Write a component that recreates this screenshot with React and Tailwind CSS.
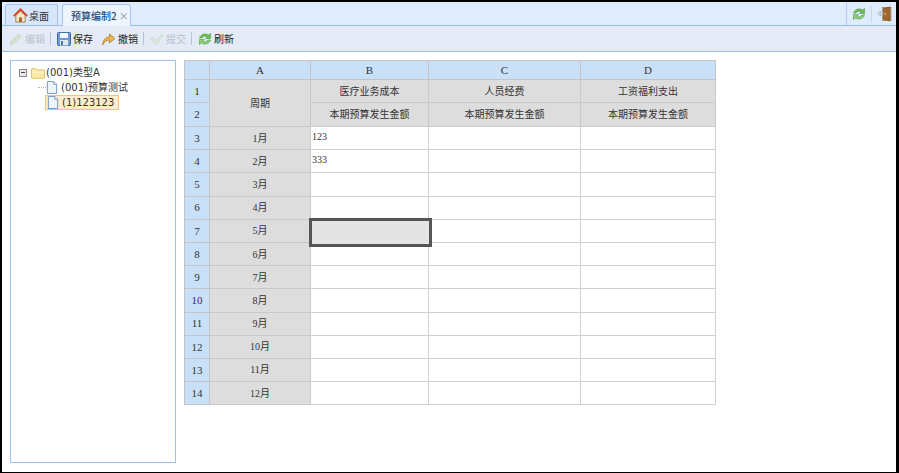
// Budget sheet screen: tabs, toolbar, tree on the left and spreadsheet on the right
const CJK = '"Noto Sans CJK SC", sans-serif';

const COLS = [
  { label: 'A', width: 'w-[101px]' },
  { label: 'B', width: 'w-[118px]' },
  { label: 'C', width: 'w-[152px]' },
  { label: 'D', width: 'w-[135px]' },
];
const MONTHS = ['1月', '2月', '3月', '4月', '5月', '6月', '7月', '8月', '9月', '10月', '11月', '12月'];

function HomeIcon() {
  return (
    <svg width="15" height="15" viewBox="0 0 16 16">
      <path d="M3 8v7h10V8L8 3.500z" fill="#f4e6c8" stroke="#8a6a3a" strokeWidth="0.8" />
      <rect x="6.500" y="10" width="3" height="5" fill="#a8622a" />
      <path d="M0.800 8.600 8 1.500l7.200 7.100" fill="none" stroke="#d8401f" strokeWidth="2" />
    </svg>
  );
}

function PencilIcon() {
  return (
    <svg width="14" height="14" viewBox="0 0 14 14">
      <path d="M1 13 2 9.500 9.500 2l2.500 2.500-7.500 7.500z" fill="#d3e3cf" stroke="#c3d3bf" strokeWidth="0.8" />
    </svg>
  );
}

function SaveIcon() {
  return (
    <svg width="14" height="14" viewBox="0 0 14 14">
      <rect x="0.500" y="0.500" width="13" height="13" rx="1" fill="#6f9bd0" stroke="#3d6ba5" />
      <rect x="3" y="1" width="8" height="5" fill="#f4f8fc" />
      <rect x="3" y="8" width="8" height="5.500" fill="#dfe7ef" />
      <rect x="4" y="9" width="2" height="4" fill="#4a77ad" />
    </svg>
  );
}

function UndoIcon() {
  return (
    <svg width="15" height="14" viewBox="0 0 15 14">
      <path d="M1.500 13C2 8 5 5 8.500 5V2l5.500 4.500L8.500 11V8c-3 0-5 1.500-7 5z" fill="#f3b54a" stroke="#a87a2a" strokeWidth="0.8" />
    </svg>
  );
}

function CheckIcon() {
  return (
    <svg width="14" height="14" viewBox="0 0 15 14">
      <path d="M1 7.500 3.500 5.500 6 8.500 12.500 2 14 3.500 6 12.500z" fill="#dbe8dc" stroke="#c5d5c8" strokeWidth="0.8" />
    </svg>
  );
}

function RefreshIcon() {
  return (
    <svg width="14" height="14" viewBox="0 0 14 14">
      <path d="M1.500 6C2.500 2.500 7 0.500 10.500 3L12.500 1.500V6.500H7.500L9.300 5C7.500 3.500 5 4 4 6z" fill="#6cbb55" stroke="#4a9a42" strokeWidth="0.6" />
      <path d="M12.500 8C11.500 11.500 7 13.500 3.500 11L1.500 12.500V7.500H6.500L4.700 9C6.500 10.500 9 10 10 8z" fill="#8fd079" stroke="#4a9a42" strokeWidth="0.6" />
    </svg>
  );
}

function DoorIcon() {
  return (
    <svg width="16" height="16" viewBox="0 0 16 16">
      <rect x="5.500" y="1.500" width="8.500" height="13" fill="#d6cfc2" stroke="#8a6a3a" strokeWidth="0.6" />
      <path d="M6.500 2.500 13 1v14l-6.500-1.500z" fill="#a0682f" stroke="#74481c" strokeWidth="0.6" />
      <rect x="7.500" y="7" width="1" height="2" fill="#e8d8a8" />
      <path d="M0.500 7.500 3.500 5V6.500H6V8.500H3.500V10z" fill="#d3dae0" stroke="#8f9aa5" strokeWidth="0.5" />
    </svg>
  );
}

function FolderIcon() {
  return (
    <svg width="14" height="12" viewBox="0 0 16 13">
      <path d="M0.500 11.500V2.500Q0.500 1.500 1.500 1.500H5.500L7 3H14.500Q15.500 3 15.500 4V11.500Q15.500 12.500 14.500 12.500H1.500Q0.500 12.500 0.500 11.500z" fill="#fbe9a6" stroke="#d8b95c" />
      <path d="M1 5.500H15" stroke="#fff6cf" />
    </svg>
  );
}

function FileIcon() {
  return (
    <svg width="12" height="13" viewBox="0 0 12 14">
      <path d="M1 0.500H8L11 3.500V13.500H1z" fill="#eef4fc" stroke="#6f92c0" />
      <path d="M8 0.500V3.500H11" fill="#fff" stroke="#6f92c0" />
    </svg>
  );
}

function ToolButton({ icon, label, disabled }) {
  return (
    <div className={`flex items-center gap-[2px] text-[10px] ${disabled ? 'text-[#b9c1cb]' : 'text-[#222]'}`}>
      {icon}
      <span>{label}</span>
    </div>
  );
}

function ToolSep() {
  return <div className="ml-[5px] mr-[6px] h-[13px] w-px bg-[#b4c4d8]" />;
}

function Tree() {
  return (
    <div className="h-[403px] w-[166px] shrink-0 border border-[#9cc2ec] bg-white pl-[8px] pt-[4px] text-[10px] text-[#333]" style={{ fontFamily: `"DejaVu Sans", ${CJK}` }}>
      <div className="flex h-[15px] items-center">
        <span className="flex h-[8px] w-[8px] items-center justify-center border border-[#888] bg-[#e8e8e8]">
          <span className="h-px w-[4px] bg-[#444]" />
        </span>
        <span className="ml-[4px]"><FolderIcon /></span>
        <span className="ml-px">(001)类型A</span>
      </div>
      <div className="flex h-[15px] items-center pl-[19px]">
        <span className="w-[8px] border-t border-dotted border-[#bbb]" />
        <FileIcon />
        <span className="ml-[3px]">(001)预算测试</span>
      </div>
      <div className="flex h-[15px] items-center pl-[26px]">
        <div className="flex h-[15px] items-center border border-[#f5c27a] bg-[#fdeccd] pl-px pr-[4px]">
          <FileIcon />
          <span className="ml-[3px]">(1)123123</span>
        </div>
      </div>
    </div>
  );
}

function Sheet() {
  const th = 'border border-[#c4c4c4] bg-[#c9e0f9] text-center text-[11px] font-normal';
  const head = 'border border-[#c9c9c9] bg-[#dddddd] text-center font-normal';
  const cell = 'border border-[#cfcfcf] bg-white px-[1px] pb-[3px] text-left font-normal';

  return (
    <table className="table-fixed border-collapse text-[10px] text-[#333]" style={{ fontFamily: `"Liberation Serif", ${CJK}` }}>
      <colgroup>
        <col className="w-[25px]" />
        {COLS.map((c) => <col key={c.label} className={c.width} />)}
      </colgroup>
      <tbody>
        <tr className="h-[19px]">
          <th className={th} />
          {COLS.map((c) => <th key={c.label} className={th}>{c.label}</th>)}
        </tr>
        <tr className="h-[23px]">
          <th className={th}>1</th>
          <td rowSpan={2} className={head}>周期</td>
          <td className={head}>医疗业务成本</td>
          <td className={head}>人员经费</td>
          <td className={head}>工资福利支出</td>
        </tr>
        <tr className="h-[24px]">
          <th className={th}>2</th>
          <td className={head}>本期预算发生金额</td>
          <td className={head}>本期预算发生金额</td>
          <td className={head}>本期预算发生金额</td>
        </tr>
        {MONTHS.map((m, i) => (
          <tr key={m} className="h-[23.2px]">
            <th className={th}>{i + 3}</th>
            <td className={head}>{m}</td>
            <td className={`${cell} relative`}>
              {i === 0 && '123'}
              {i === 1 && '333'}
              {/* selected cell marker */}
              {i === 4 && <div className="absolute -bottom-[5px] -left-[2px] -right-[4px] -top-[2px] z-10 border-[3px] border-[#555555] bg-[#e4e4e4]" />}
            </td>
            <td className={cell} />
            <td className={cell} />
          </tr>
        ))}
      </tbody>
    </table>
  );
}

export default function App() {
  return (
    <div className="flex h-[473px] w-[899px] flex-col overflow-hidden border-b border-l-2 border-r-[3px] border-t-2 border-black bg-white" style={{ fontFamily: CJK }}>
      {/* Tabs */}
      <div className="flex h-[24px] shrink-0 items-end justify-between border-b border-[#99bbe8] bg-[#deecfd] pl-[3px]">
        <div className="flex items-end gap-[4px]">
          <div className="flex h-[21px] w-[53px] items-center gap-px rounded-t-[3px] border border-b-0 border-[#a8c4ea] bg-[#d6e5f8] pl-[7px] text-[10px] text-[#333]">
            <HomeIcon />
            <span>桌面</span>
          </div>
          <div className="-mb-px flex h-[22px] w-[69px] items-center gap-[2px] rounded-t-[3px] border border-b-0 border-[#a8c4ea] bg-[#eef4fb] pl-[8px] text-[10px] font-medium">
            <span className="text-[#2b4a78]">预算编制2</span>
            <span className="text-[10px] leading-none text-[#8a9bb0]">×</span>
          </div>
        </div>
        <div className="flex h-full items-center border-l border-[#b4cdee] pl-[5px] pr-[3px]">
          <RefreshIcon />
          <div className="mx-[5px] h-[16px] w-px bg-[#c8d8ec]" />
          <DoorIcon />
        </div>
      </div>

      {/* Toolbar */}
      <div className="flex h-[26px] shrink-0 items-center border-b border-[#99bbe8] bg-[#e4ebf6] pl-[7px]">
        <ToolButton icon={<PencilIcon />} label="编辑" disabled />
        <ToolSep />
        <ToolButton icon={<SaveIcon />} label="保存" />
        <div className="w-[8px]" />
        <ToolButton icon={<UndoIcon />} label="撤销" />
        <ToolSep />
        <ToolButton icon={<CheckIcon />} label="提交" disabled />
        <ToolSep />
        <ToolButton icon={<RefreshIcon />} label="刷新" />
      </div>

      {/* Body */}
      <div className="flex min-h-0 flex-1 items-start gap-[8px] pl-[8px] pt-[8px]">
        <Tree />
        <Sheet />
      </div>
    </div>
  );
}
